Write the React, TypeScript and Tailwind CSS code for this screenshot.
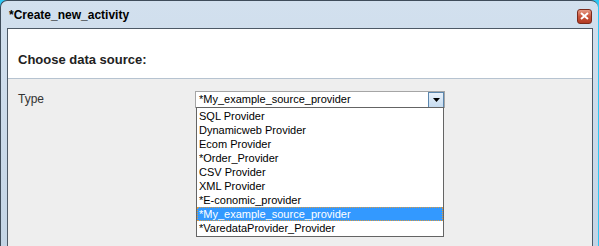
import React from "react";

const items = [
  "SQL Provider",
  "Dynamicweb Provider",
  "Ecom Provider",
  "*Order_Provider",
  "CSV Provider",
  "XML Provider",
  "*E-conomic_provider",
  "*My_example_source_provider",
  "*VaredataProvider_Provider",
];

const selected = "*My_example_source_provider";

export default function App() {
  return (
    <div
      className="w-[599px] h-[246px] overflow-hidden flex bg-[#2ec8f5]"
      style={{ fontFamily: '"Liberation Sans", Arial, sans-serif' }}
    >
      {/* Window */}
      <div className="w-[598px] h-[260px] flex flex-col rounded-t-[7px] border-l border-t border-[#3f4c5a] bg-gradient-to-b from-[#d2e0ee] to-[#c3d4e5] pl-[6px] pr-[5px]">
        {/* Title bar */}
        <div className="h-[27px] shrink-0 flex items-center justify-between">
          <span className="text-[12px] font-bold text-black pl-[2px] pt-[1px]">*Create_new_activity</span>
          <button className="w-[15px] h-[15px] mr-[1px] mt-[3px] rounded-[3px] border border-[#7a2a1c] bg-gradient-to-b from-[#e59a85] via-[#c9533a] to-[#b23a22] flex items-center justify-center">
            <svg width="9" height="8" viewBox="0 0 9 8">
              <path d="M1 1 L8 7 M8 1 L1 7" stroke="white" strokeWidth="2" />
            </svg>
          </button>
        </div>

        {/* Content */}
        <div className="flex-1 flex flex-col border border-[#4d5966] bg-[#eeeeee] relative">
          <div className="h-[50px] shrink-0 bg-white border-b border-[#b6c3d0] flex items-center pl-[10px] pt-[12px]">
            <h2 className="text-[13px] font-bold text-[#222]">Choose data source:</h2>
          </div>

          <div className="flex items-start pt-[12px] pl-[10px]">
            <span className="w-[177px] text-[12px] text-[#333] leading-[16px]">Type</span>
            {/* Select */}
            <div className="relative w-[250px]">
              <div className="h-[17px] flex items-center border border-[#a5a5a5] bg-white">
                <span className="flex-1 pl-[3px] text-[11px] text-black leading-none">{selected}</span>
                <div className="w-[16px] h-[16px] border border-[#5b86ad] bg-gradient-to-b from-[#e8f1fa] to-[#c6dcf0] flex items-center justify-center">
                  <svg width="7" height="4" viewBox="0 0 7 4">
                    <path d="M0 0 L7 0 L3.5 4 Z" fill="black" />
                  </svg>
                </div>
              </div>
              {/* Open list */}
              <ul className="absolute left-[1px] top-[16px] w-[248px] border border-[#646464] bg-white pt-[1px] pb-[1px]">
                {items.map((item) => (
                  <li
                    key={item}
                    className={
                      item === selected
                        ? "h-[14px] pl-[2px] text-[11px] leading-[14px] text-white bg-[#3399ff] outline-1 outline-dotted outline-[#e09a3c] -outline-offset-1"
                        : "h-[14px] pl-[2px] text-[11px] leading-[14px] text-black"
                    }
                  >
                    {item}
                  </li>
                ))}
              </ul>
            </div>
          </div>
        </div>
      </div>
    </div>
  );
}
